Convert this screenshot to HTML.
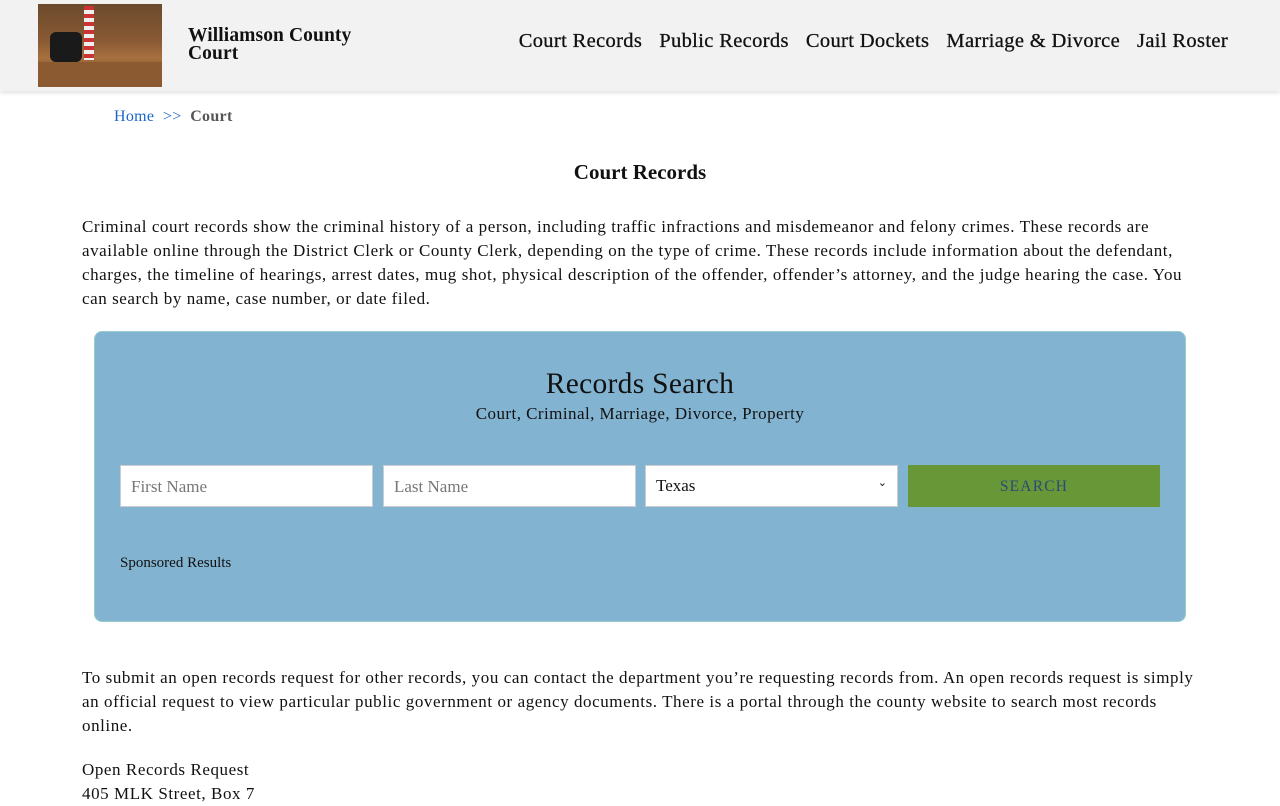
<!DOCTYPE html>
<html><head><meta charset="utf-8"><style>
body{margin:0;font-family:"Liberation Serif",serif;color:#111;background:#fff;width:1280px;height:800px;overflow:hidden}
.hdr{height:91px;background:#f2f2f2;box-shadow:0 2px 4px rgba(0,0,0,.12);position:relative}
.img{position:absolute;left:38px;top:4px;width:124px;height:83px;background:linear-gradient(180deg,#6b4a2c 0%,#8a5a34 45%,#a8703f 65%,#5c3b20 100%)}
.img .chair{position:absolute;left:12px;top:28px;width:32px;height:30px;background:#1a1a1a;border-radius:6px}
.img .flag{position:absolute;left:46px;top:2px;width:10px;height:54px;background:repeating-linear-gradient(180deg,#c33 0 4px,#eee 4px 8px)}
.img .desk{position:absolute;left:0;top:58px;width:124px;height:25px;background:#8b5a30}
.title{position:absolute;left:188px;top:27px;font-size:19.5px;font-weight:bold;line-height:18px;letter-spacing:.1px}
.nav{position:absolute;right:52px;top:30px;font-size:20.5px;letter-spacing:.35px;-webkit-text-stroke:.3px #111}
.nav span{margin-left:17px}
.bc{position:absolute;left:114px;top:108px;font-size:16px;letter-spacing:.3px}
.bc a{color:#1a66cc}
h1{position:absolute;left:0;width:1280px;top:160px;margin:0;text-align:center;font-size:21px}
p{position:absolute;left:82px;width:1130px;margin:0;font-size:17px;letter-spacing:.57px;line-height:24px;white-space:nowrap}
.box{position:absolute;left:94px;top:331px;width:1090px;height:289px;background:#82b3d1;border-radius:8px;border:1px solid #9cc}
.box h2{position:absolute;top:36px;width:100%;text-align:center;font-weight:normal;font-size:29.5px;letter-spacing:.3px;margin:0}
.box .sub{position:absolute;top:72px;width:100%;text-align:center;font-size:17px;letter-spacing:.45px}
.in{position:absolute;top:133px;width:253px;height:42px;background:#fff;box-sizing:border-box;border:1px solid #ccc;font-size:17px;color:#777;padding:11px 10px}
.btn{position:absolute;left:813px;top:133px;width:252px;height:42px;background:#689737;color:#2a4a7a;text-align:center;line-height:44px;font-size:15.5px;letter-spacing:1.2px}
.sp{position:absolute;left:25px;top:223px;font-size:15px}
</style></head><body>
<div class="hdr"><div class="img"><div class="desk"></div><div class="chair"></div><div class="flag"></div></div>
<div class="title">Williamson County<br>Court</div>
<div class="nav"><span>Court Records</span><span>Public Records</span><span>Court Dockets</span><span>Marriage &amp; Divorce</span><span>Jail Roster</span></div></div>
<div class="bc"><a>Home</a> &nbsp;<a>&gt;&gt;</a>&nbsp; <b style="color:#555">Court</b></div>
<h1>Court Records</h1>
<p style="top:215px">Criminal court records show the criminal history of a person, including traffic infractions and misdemeanor and felony crimes. These records are<br>available online through the District Clerk or County Clerk, depending on the type of crime. These records include information about the defendant,<br>charges, the timeline of hearings, arrest dates, mug shot, physical description of the offender, offender’s attorney, and the judge hearing the case. You<br>can search by name, case number, or date filed.</p>
<div class="box"><h2>Records Search</h2><div class="sub">Court, Criminal, Marriage, Divorce, Property</div>
<div class="in" style="left:25px">First Name</div><div class="in" style="left:288px">Last Name</div>
<div class="in" style="left:550px;color:#111;padding-top:10px">Texas<span style="float:right;font-size:11px">&#8964;</span></div>
<div class="btn">SEARCH</div><div class="sp">Sponsored Results</div></div>
<p style="top:666px">To submit an open records request for other records, you can contact the department you’re requesting records from. An open records request is simply<br>an official request to view particular public government or agency documents. There is a portal through the county website to search most records<br>online.</p>
<p style="top:758px">Open Records Request<br>405 MLK Street, Box 7</p>
</body></html>
